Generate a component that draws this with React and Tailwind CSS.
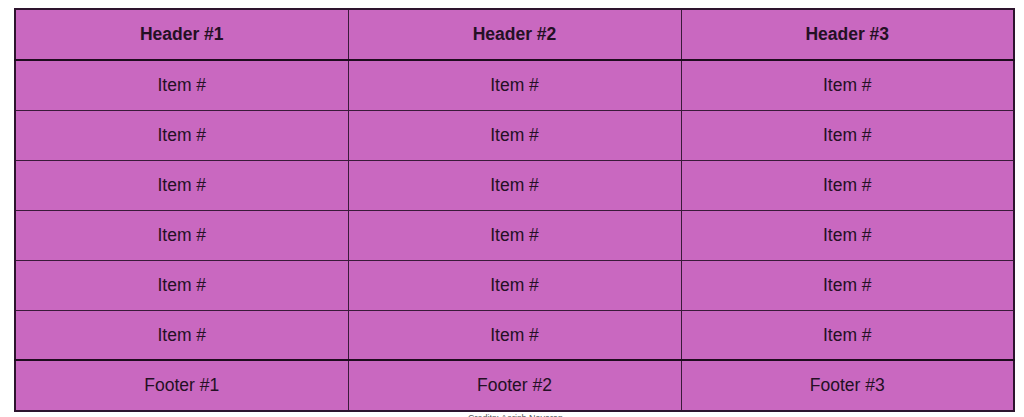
import React from "react";

const rows = [1, 2, 3, 4, 5, 6];
const cols = [1, 2, 3];

function App() {
  return (
    <div className="bg-white min-h-screen pt-[8px] pl-[14px] pr-[9px] font-['Liberation_Sans',Arial,sans-serif] text-[#241024]">
      <table className="w-full border-collapse border-2 border-[#2e142e] bg-[#c968c0] table-fixed">
        <thead>
          <tr className="h-[51px] border-b-2 border-[#1f0c1f]">
            {cols.map((c) => (
              <th key={c} className="border border-[#3a1a3a] font-bold text-[17.5px]">Header #{c}</th>
            ))}
          </tr>
        </thead>
        <tbody>
          {rows.map((r) => (
            <tr key={r} className="h-[50px]">
              {cols.map((c) => (
                <td key={c} className="border border-[#3a1a3a] text-center text-[17.5px]">Item #</td>
              ))}
            </tr>
          ))}
        </tbody>
        <tfoot>
          <tr className="h-[51px] border-t-2 border-[#1f0c1f]">
            {cols.map((c) => (
              <td key={c} className="border border-[#3a1a3a] text-center text-[17.5px]">Footer #{c}</td>
            ))}
          </tr>
        </tfoot>
      </table>
      <p className="text-center text-[9px] text-[#555] leading-none mt-[2px] pl-[2px]">Credits: Aerish Nayaran</p>
    </div>
  );
}

export default App;
